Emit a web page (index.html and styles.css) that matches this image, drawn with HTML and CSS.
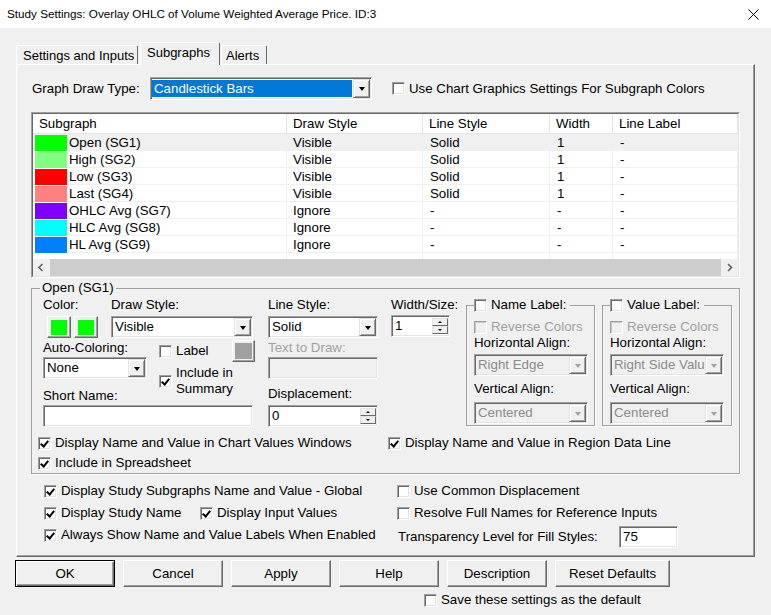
FILE: index.html
```html
<!DOCTYPE html>
<html lang="en">
<head>
    <meta charset="UTF-8">
    <title>Study Settings</title>
    <link rel="stylesheet" href="styles.css">
</head>
<body>

    <div class="titlebar">
        <span class="title">Study Settings: Overlay OHLC of Volume Weighted Average Price. ID:3</span>
        <svg class="close" viewBox="0 0 11 11"><path d="M0.5 0.5 L10.5 10.5 M10.5 0.5 L0.5 10.5" stroke="#000" stroke-width="1" fill="none"/></svg>
    </div>

    <div class="tabs">
        <div class="tab t1">Settings and Inputs</div>
        <div class="tab t2 active">Subgraphs</div>
        <div class="tab t3">Alerts</div>
    </div>

    <div class="panel">

        <div class="top-row">
            <span class="top-label">Graph Draw Type:</span>
            <div class="field select w222 h23">
                <span class="val hl">Candlestick Bars</span>
                <span class="arrow"></span>
            </div>
            <label class="check top-check"><span class="cb"></span>Use Chart Graphics Settings For Subgraph Colors</label>
        </div>

        <!-- liste des subgraphs -->
        <div class="list">
            <div class="list-in">
                <div class="list-head">
                    <span>Subgraph</span><span>Draw Style</span><span>Line Style</span><span>Width</span><span>Line Label</span>
                </div>
                <div class="list-row sel">
                    <span class="name"><i style="background:#00ff00"></i>Open (SG1)</span><span>Visible</span><span class="c3">Solid</span><span class="c3">1</span><span class="c3">-</span>
                </div>
                <div class="list-row">
                    <span class="name"><i style="background:#80ff80"></i>High (SG2)</span><span>Visible</span><span class="c3">Solid</span><span class="c3">1</span><span class="c3">-</span>
                </div>
                <div class="list-row">
                    <span class="name"><i style="background:#ff0000"></i>Low (SG3)</span><span>Visible</span><span class="c3">Solid</span><span class="c3">1</span><span class="c3">-</span>
                </div>
                <div class="list-row">
                    <span class="name"><i style="background:#ff8080"></i>Last (SG4)</span><span>Visible</span><span class="c3">Solid</span><span class="c3">1</span><span class="c3">-</span>
                </div>
                <div class="list-row">
                    <span class="name"><i style="background:#8000ff"></i>OHLC Avg (SG7)</span><span>Ignore</span><span class="c3">-</span><span class="c3">-</span><span class="c3">-</span>
                </div>
                <div class="list-row">
                    <span class="name"><i style="background:#00ffff"></i>HLC Avg (SG8)</span><span>Ignore</span><span class="c3">-</span><span class="c3">-</span><span class="c3">-</span>
                </div>
                <div class="list-row">
                    <span class="name"><i style="background:#0080ff"></i>HL Avg (SG9)</span><span>Ignore</span><span class="c3">-</span><span class="c3">-</span><span class="c3">-</span>
                </div>
                <div class="list-row fill">
                    <span></span><span></span><span></span><span></span><span></span>
                </div>
                <div class="hscroll">
                    <span class="sb-btn"><svg viewBox="0 0 17 17"><path d="M9.5 5 L6 8.5 L9.5 12" stroke="#606060" stroke-width="1.6" fill="none"/></svg></span>
                    <span class="thumb"></span>
                    <span class="sb-btn"><svg viewBox="0 0 17 17"><path d="M7 5 L10.5 8.5 L7 12" stroke="#606060" stroke-width="1.6" fill="none"/></svg></span>
                </div>
            </div>
        </div>

        <!-- reglages du subgraph selectionne -->
        <fieldset class="group">
            <legend>Open (SG1)</legend>
            <div class="group-cols">

                <div class="col-a">
                    <div class="row-a1">
                        <div class="color-col">
                            <div class="lbl">Color:</div>
                            <div class="color-btns">
                                <span class="cbtn"><i style="background:#00ff00"></i></span>
                                <span class="cbtn"><i style="background:#00ff00"></i></span>
                            </div>
                        </div>
                        <div>
                            <div class="lbl">Draw Style:</div>
                            <div class="field select w142 mt3">
                                <span class="val">Visible</span>
                                <span class="arrow"></span>
                            </div>
                        </div>
                    </div>
                    <div class="row-a2">
                        <div class="auto-col">
                            <div class="lbl">Auto-Coloring:</div>
                            <div class="field select w104 mt1">
                                <span class="val">None</span>
                                <span class="arrow"></span>
                            </div>
                        </div>
                        <div class="label-col">
                            <div class="label-row">
                                <label class="check"><span class="cb"></span>Label</label>
                                <span class="cbtn gray"><i></i></span>
                            </div>
                            <label class="check two"><span class="cb on"></span><span>Include in<br>Summary</span></label>
                        </div>
                    </div>
                    <div class="lbl">Short Name:</div>
                    <div class="field w210 mt1"></div>
                </div>

                <div class="col-b">
                    <div class="lbl">Line Style:</div>
                    <div class="field select w110 mt3">
                        <span class="val">Solid</span>
                        <span class="arrow"></span>
                    </div>
                    <div class="lbl dis mt2">Text to Draw:</div>
                    <div class="field off w110 mt1"></div>
                    <div class="lbl mt7">Displacement:</div>
                    <div class="field spin w110 mt3">
                        <span class="val">0</span>
                        <span class="spin-btns"><b class="up"></b><b class="down"></b></span>
                    </div>
                </div>

                <div class="col-c">
                    <div class="lbl">Width/Size:</div>
                    <div class="field spin w59 mt2">
                        <span class="val">1</span>
                        <span class="spin-btns"><b class="up"></b><b class="down"></b></span>
                    </div>
                </div>

                <fieldset class="sub sub-name">
                    <legend><label class="check"><span class="cb"></span>Name Label:</label></legend>
                    <label class="check dis rev"><span class="cb off"></span>Reverse Colors</label>
                    <div class="lbl">Horizontal Align:</div>
                    <div class="field select off w114 mt3">
                        <span class="val">Right Edge</span>
                        <span class="arrow"></span>
                    </div>
                    <div class="lbl mt5">Vertical Align:</div>
                    <div class="field select off w114 mt5">
                        <span class="val">Centered</span>
                        <span class="arrow"></span>
                    </div>
                </fieldset>

                <fieldset class="sub sub-value">
                    <legend><label class="check"><span class="cb"></span>Value Label:</label></legend>
                    <label class="check dis rev"><span class="cb off"></span>Reverse Colors</label>
                    <div class="lbl">Horizontal Align:</div>
                    <div class="field select off w114 mt3">
                        <span class="val">Right Side Valu</span>
                        <span class="arrow"></span>
                    </div>
                    <div class="lbl mt5">Vertical Align:</div>
                    <div class="field select off w114 mt5">
                        <span class="val">Centered</span>
                        <span class="arrow"></span>
                    </div>
                </fieldset>
            </div>

            <div class="group-checks">
                <div class="gc-row">
                    <label class="check gc-left"><span class="cb on"></span>Display Name and Value in Chart Values Windows</label>
                    <label class="check"><span class="cb on"></span>Display Name and Value in Region Data Line</label>
                </div>
                <div class="gc-row">
                    <label class="check"><span class="cb on"></span>Include in Spreadsheet</label>
                </div>
            </div>
        </fieldset>

        <div class="globals">
            <div class="gcol-left">
                <label class="check"><span class="cb on"></span>Display Study Subgraphs Name and Value - Global</label>
                <div class="grow">
                    <label class="check study-name"><span class="cb on"></span>Display Study Name</label>
                    <label class="check"><span class="cb on"></span>Display Input Values</label>
                </div>
                <label class="check"><span class="cb on"></span>Always Show Name and Value Labels When Enabled</label>
            </div>
            <div class="gcol-right">
                <label class="check"><span class="cb"></span>Use Common Displacement</label>
                <label class="check"><span class="cb"></span>Resolve Full Names for Reference Inputs</label>
                <div class="trans">
                    <span class="trans-label">Transparency Level for Fill Styles:</span>
                    <div class="field w59"><span class="val">75</span></div>
                </div>
            </div>
        </div>
    </div>

    <div class="buttons">
        <span class="btn default">OK</span>
        <span class="btn">Cancel</span>
        <span class="btn">Apply</span>
        <span class="btn">Help</span>
        <span class="btn">Description</span>
        <span class="btn wide">Reset Defaults</span>
    </div>

    <label class="check save"><span class="cb"></span>Save these settings as the default</label>

</body>
</html>
```

FILE: styles.css
```css
* {
    box-sizing: border-box;
}

body {
    margin: 0;
    width: 771px;
    height: 615px;
    overflow: hidden;
    background: #f0f0f0;
    font-family: "Liberation Sans", Arial, sans-serif;
    font-size: 13.3px;
    line-height: 16px;
    color: #000;
}

/* barre de titre */
.titlebar {
    height: 28px;
    background: #fff;
    display: flex;
    align-items: center;
    justify-content: space-between;
    padding: 0 12px 0 7px;
}

.title {
    font-size: 11.7px;
}

.close {
    width: 11px;
    height: 11px;
}

/* onglets */
.tabs {
    display: flex;
    align-items: flex-end;
    height: 22px;
    margin: 14px 0 0 16px;
}

.tab {
    height: 19px;
    line-height: 19px;
    padding-left: 6px;
    font-size: 13px;
    white-space: nowrap;
    border: 1px solid;
    border-color: #fff #696969 transparent #fff;
    border-bottom: none;
    border-radius: 2px 2px 0 0;
    background: #f0f0f0;
}

.t1 { width: 122px; }
.t2 { width: 80px; margin-left: 2px; }
.t3 { width: 46px; margin-left: 1px; padding-left: 4px; }

.tab.active {
    height: 23px;
    line-height: 20px;
    margin-bottom: -1px;
    position: relative;
    z-index: 1;
}

.panel {
    margin-left: 16px;
    width: 739px;
    height: 493px;
    border: 1px solid;
    border-color: #fff #696969 #696969 #fff;
    box-shadow: inset -1px -1px 0 #a0a0a0;
}

/* champs type windows classique */
.field {
    height: 22px;
    background: #fff;
    border: 1px solid;
    border-color: #a0a0a0 #fff #fff #a0a0a0;
    box-shadow: inset 1px 1px 0 #696969, inset -1px -1px 0 #e3e3e3;
    display: flex;
    padding: 1px;
}

.field .val {
    flex: 1;
    padding-left: 2px;
    line-height: 18px;
    white-space: nowrap;
    overflow: hidden;
}

.field.off {
    background: #f0f0f0;
}

.field.off .val {
    color: #8a8a8a;
}

.arrow {
    width: 17px;
    flex: none;
    display: flex;
    align-items: center;
    justify-content: center;
    background: #f0f0f0;
    border: 1px solid;
    border-color: #e3e3e3 #696969 #696969 #e3e3e3;
    box-shadow: inset 1px 1px 0 #fff, inset -1px -1px 0 #a0a0a0;
}

.arrow::after {
    content: "";
    border-top: 4px solid #000;
    border-left: 3.5px solid transparent;
    border-right: 3.5px solid transparent;
    margin-top: 1px;
}

.off .arrow::after {
    border-top-color: #a0a0a0;
}

.spin-btns {
    width: 16px;
    flex: none;
    display: flex;
    flex-direction: column;
    padding: 1px 0;
}

.spin-btns b {
    flex: 1;
    display: flex;
    align-items: center;
    justify-content: center;
    background: #f0f0f0;
    border: 1px solid;
    border-color: #e3e3e3 #696969 #696969 #e3e3e3;
}

.spin-btns .up::after {
    content: "";
    border-bottom: 2px solid #000;
    border-left: 2px solid transparent;
    border-right: 2px solid transparent;
}

.spin-btns .down::after {
    content: "";
    border-top: 2px solid #000;
    border-left: 2px solid transparent;
    border-right: 2px solid transparent;
}

.val.hl {
    background: #0078d7;
    color: #fff;
    margin: 1px 1px 1px 0;
    line-height: 17px;
}

.h23 { height: 23px; }
.w59 { width: 59px; }
.w104 { width: 104px; }
.w110 { width: 110px; }
.w114 { width: 114px; }
.w142 { width: 142px; }
.w210 { width: 210px; }
.w222 { width: 222px; }

.mt1 { margin-top: 1px; }
.mt2 { margin-top: 2px; }
.mt3 { margin-top: 3px; }
.mt5 { margin-top: 5px; }
.mt7 { margin-top: 7px; }

/* cases a cocher */
.check {
    display: flex;
    align-items: center;
    gap: 4px;
    white-space: nowrap;
}

.cb {
    width: 13px;
    height: 13px;
    flex: none;
    position: relative;
    background: #fff;
    border: 1px solid;
    border-color: #a0a0a0 #fff #fff #a0a0a0;
    box-shadow: inset 1px 1px 0 #696969, inset -1px -1px 0 #e3e3e3;
}

.cb.on::after {
    content: "";
    position: absolute;
    left: 3px;
    top: 1px;
    width: 3px;
    height: 6px;
    border: solid #000;
    border-width: 0 2px 2px 0;
    transform: rotate(40deg);
}

.cb.off {
    background: #f0f0f0;
    box-shadow: inset 1px 1px 0 #c8c8c8;
}

.dis {
    color: #a0a0a0;
}

/* ligne du haut */
.top-row {
    display: flex;
    align-items: center;
    height: 23px;
    margin: 12px 0 0 15px;
}

.top-label {
    width: 118px;
}

.top-check {
    margin-left: 20px;
}

/* liste */
.list {
    margin: 12px 0 0 14px;
    width: 709px;
    border: 1px solid;
    border-color: #a0a0a0 #fff #fff #a0a0a0;
}

.list-in {
    border: 1px solid;
    border-color: #696969 #e3e3e3 #e3e3e3 #696969;
    background: #fff;
}

.list-head,
.list-row {
    display: grid;
    grid-template-columns: 254px 136px 127px 63px 1fr;
}

.list-head {
    height: 20px;
    border-bottom: 1px solid #e5e5e5;
}

.list-head span {
    padding-left: 6px;
    line-height: 19px;
    border-right: 1px solid #e5e5e5;
}

.list-row {
    height: 17px;
    border-bottom: 1px solid #f0f0f0;
}

.list-row span {
    padding-left: 6px;
    line-height: 17px;
    border-right: 1px solid #f0f0f0;
    white-space: nowrap;
}

.list-row .c3 {
    padding-left: 7px;
}

.list-row .name {
    display: flex;
    align-items: center;
    padding-left: 2px;
    gap: 2px;
}

.list-row .name i {
    width: 32px;
    height: 16px;
}

.list-row.sel {
    background: #f0f0f0;
}

.list-row.fill {
    height: 6px;
    border-bottom: none;
}

.hscroll {
    display: flex;
    height: 17px;
    background: #f0f0f0;
}

.sb-btn {
    width: 17px;
    height: 17px;
}

.sb-btn svg {
    width: 17px;
    height: 17px;
    display: block;
}

.thumb {
    flex: 1;
    background: #cdcdcd;
}

/* groupe du subgraph */
fieldset {
    margin: 0;
    min-width: 0;
}

.group {
    margin: 2px 0 0 14px;
    width: 709px;
    padding: 0 6px;
    border: 1px solid #a0a0a0;
    box-shadow: 1px 1px 0 #fff;
}

.group > legend {
    padding: 0 2px;
    margin-left: 2px;
    line-height: 16px;
}

.group-cols {
    display: flex;
    padding-top: 1px;
}

.lbl {
    height: 16px;
    white-space: nowrap;
}

.col-a {
    width: 212px;
    margin-left: 5px;
}

.row-a1 {
    display: flex;
}

.color-col {
    width: 68px;
}

.color-btns {
    display: flex;
    gap: 3px;
    margin: 3px 0 0 4px;
}

.cbtn {
    width: 24px;
    height: 22px;
    display: flex;
    align-items: center;
    justify-content: center;
    background: #f0f0f0;
    border: 1px solid;
    border-color: #fff #696969 #696969 #fff;
    box-shadow: inset -1px -1px 0 #a0a0a0;
}

.cbtn i {
    width: 16px;
    height: 15px;
}

.cbtn.gray {
    width: 23px;
    height: 22px;
}

.cbtn.gray i {
    width: 17px;
    height: 16px;
    background: #a0a0a0;
}

.row-a2 {
    display: flex;
    height: 48px;
    margin-top: 2px;
}

.auto-col {
    width: 116px;
}

.label-row {
    display: flex;
    align-items: center;
    justify-content: space-between;
    width: 96px;
    height: 22px;
}

.check.two {
    margin-top: 3px;
    line-height: 16px;
}

.col-b {
    width: 110px;
    margin-left: 13px;
}

.col-c {
    width: 59px;
    margin-left: 13px;
}

.sub {
    height: 129px;
    padding: 0 0 0 7px;
    border: 1px solid #a0a0a0;
    box-shadow: 1px 1px 0 #fff;
}

.sub-name {
    width: 129px;
    margin-left: 16px;
}

.sub-value {
    width: 130px;
    margin-left: 7px;
}

.sub legend {
    padding: 0 4px 0 0;
    line-height: 16px;
}

.rev {
    margin-top: 6px;
    height: 16px;
}

.group-checks {
    margin-top: 6px;
}

.gc-row {
    display: flex;
    height: 20px;
    align-items: center;
}

.gc-left {
    width: 350px;
}

/* options globales */
.globals {
    display: flex;
    margin: 6px 0 0 27px;
}

.gcol-left {
    width: 353px;
}

.globals .check {
    height: 22px;
}

.grow {
    display: flex;
}

.study-name {
    width: 156px;
}

.trans {
    display: flex;
    align-items: center;
    height: 26px;
    padding-left: 1px;
}

.trans-label {
    width: 221px;
}

/* boutons */
.buttons {
    display: flex;
    gap: 8px;
    margin: 3px 0 0 15px;
}

.btn {
    width: 100px;
    height: 27px;
    display: flex;
    align-items: center;
    justify-content: center;
    background: #f0f0f0;
    border: 1px solid;
    border-color: #fff #696969 #696969 #fff;
    box-shadow: inset -1px -1px 0 #a0a0a0;
}

.btn.default {
    border-color: #000;
    box-shadow: inset 1px 1px 0 #fff, inset -1px -1px 0 #696969, inset -2px -2px 0 #a0a0a0;
}

.btn.wide {
    width: 115px;
}

.save {
    margin: 5px 0 0 424px;
}
```
